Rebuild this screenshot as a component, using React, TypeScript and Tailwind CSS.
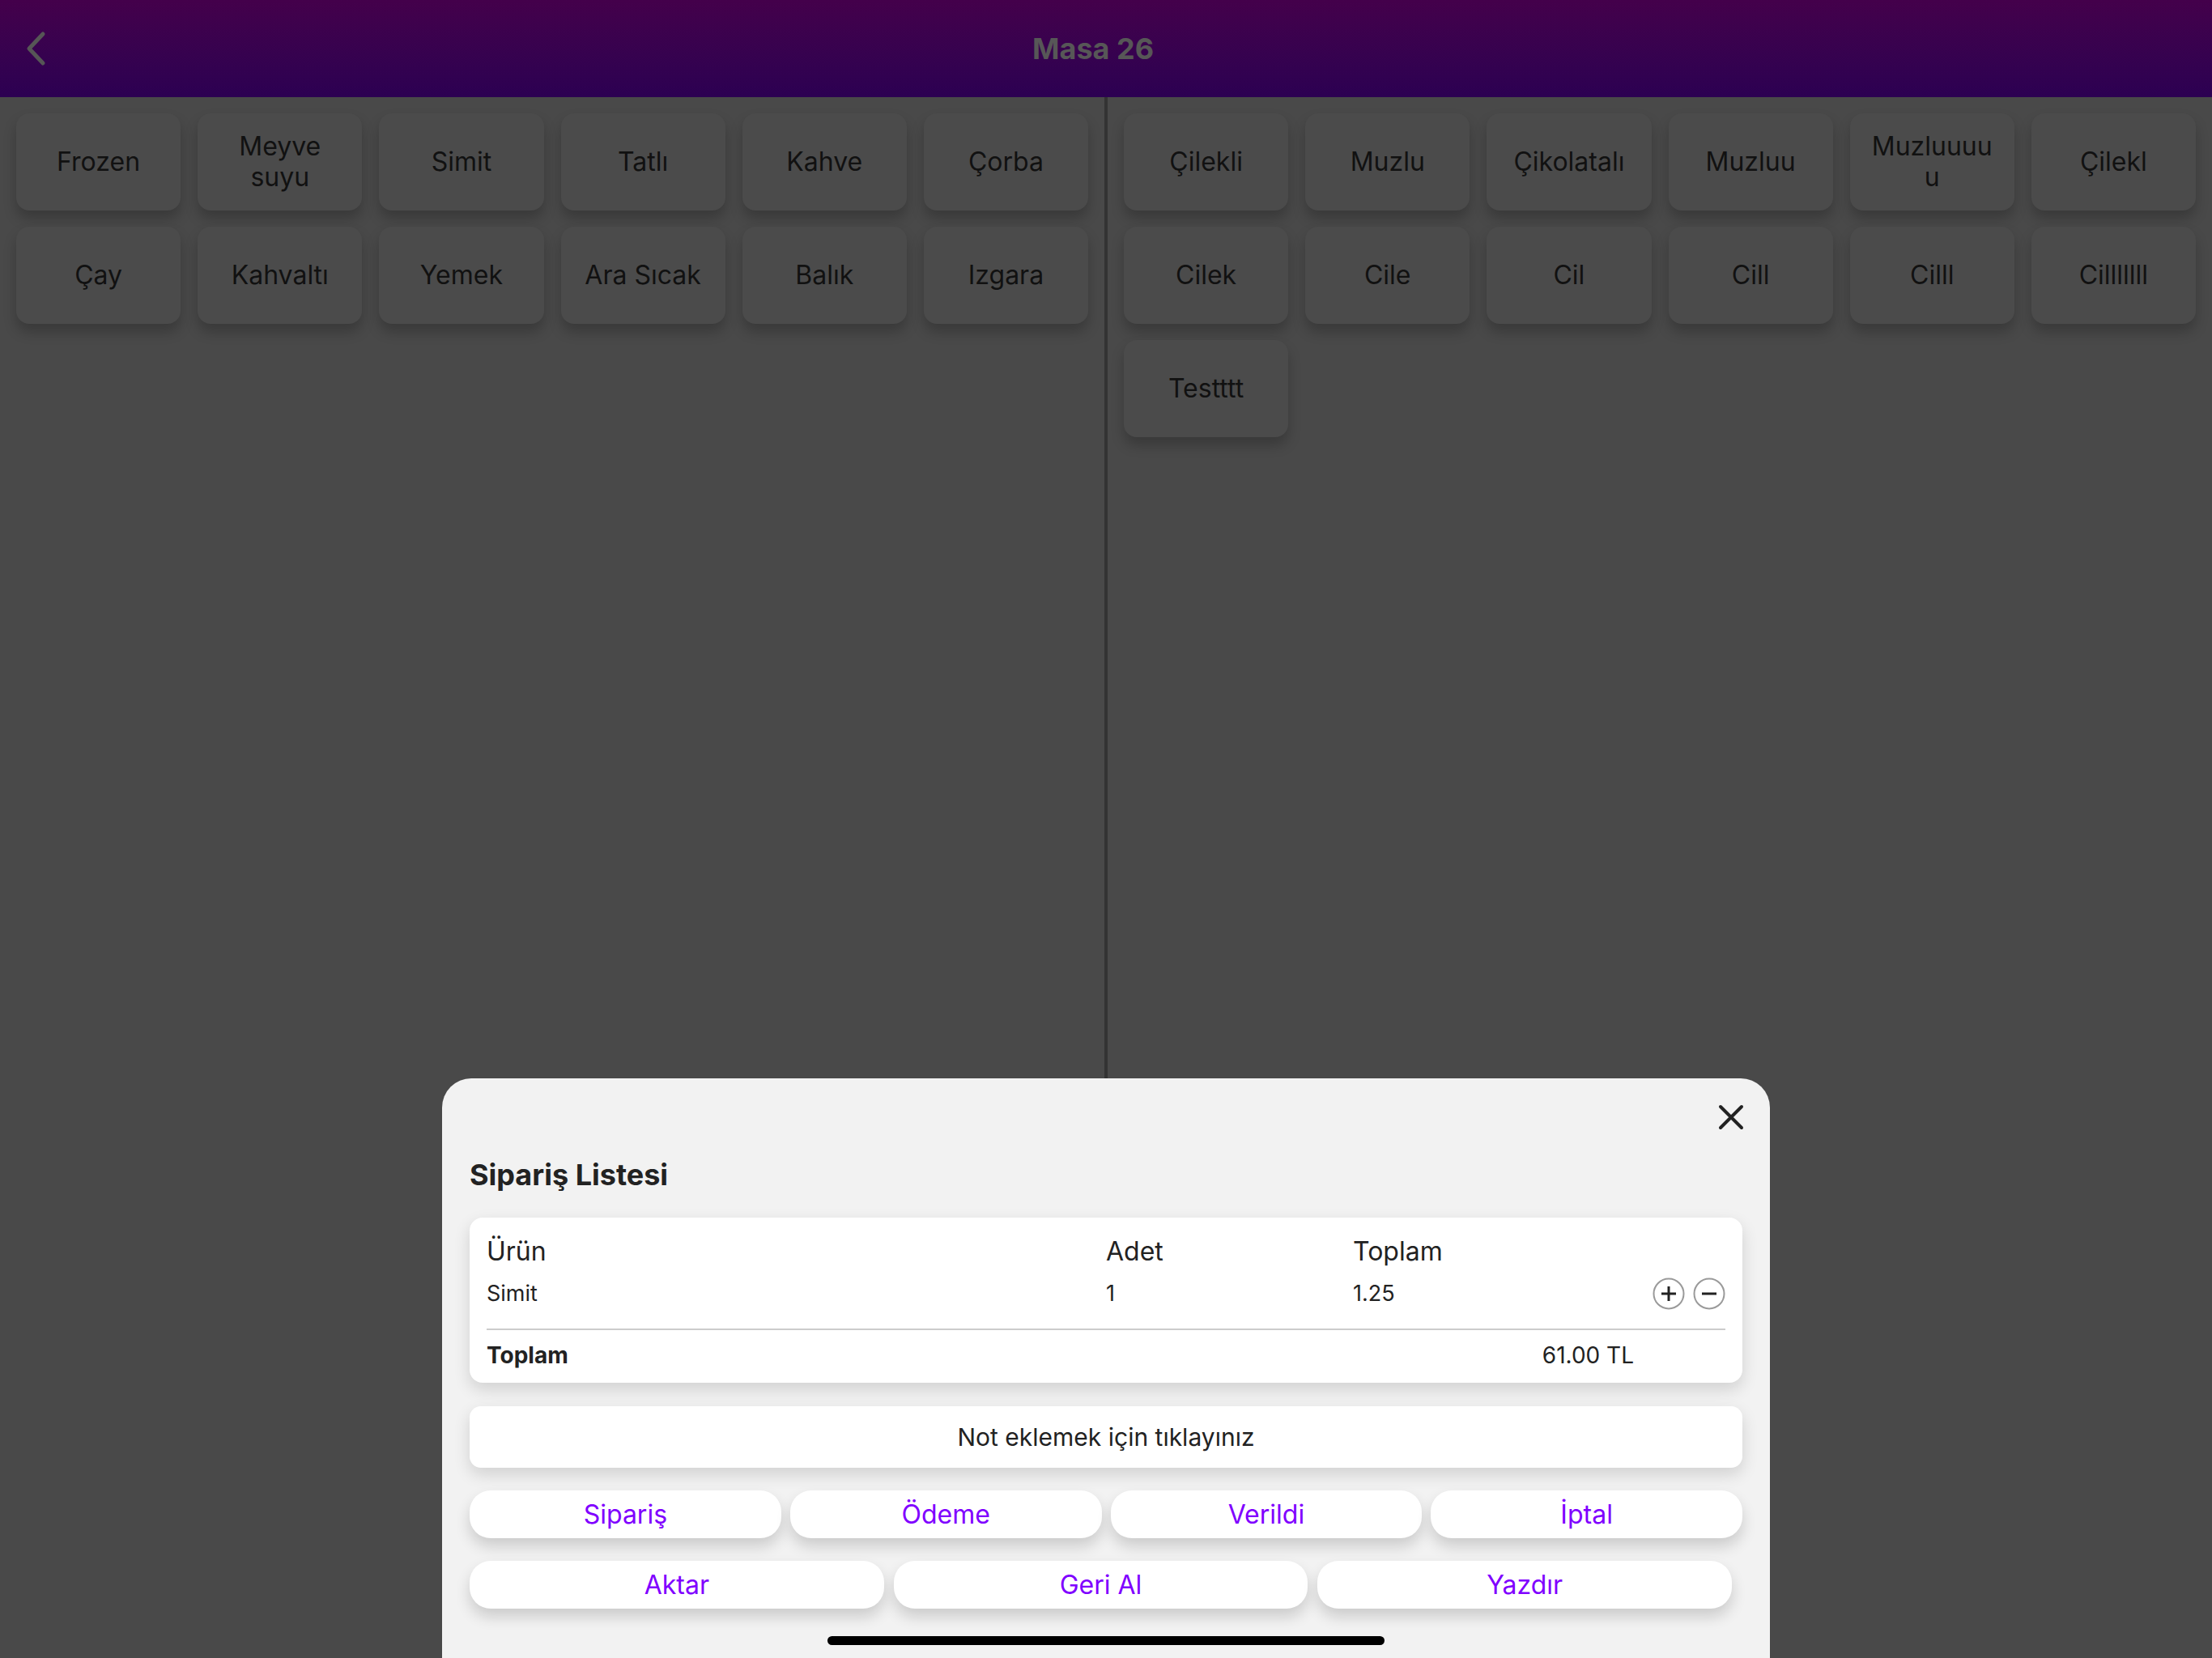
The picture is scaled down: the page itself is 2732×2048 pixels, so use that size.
import { FunctionComponent } from 'react'

const leftCategories = ['Frozen', 'Meyve\nsuyu', 'Simit', 'Tatlı', 'Kahve', 'Çorba', 'Çay', 'Kahvaltı', 'Yemek', 'Ara Sıcak', 'Balık', 'Izgara']

const rightProducts = ['Çilekli', 'Muzlu', 'Çikolatalı', 'Muzluu', 'Muzluuuu\nu', 'Çilekl', 'Cilek', 'Cile', 'Cil', 'Cill', 'Cilll', 'Cilllllll', 'Testttt']

const topActions = ['Sipariş', 'Ödeme', 'Verildi', 'İptal']
const bottomActions = ['Aktar', 'Geri Al', 'Yazdır']

// kategori / ürün kutusu
const Tile: FunctionComponent<{ label: string }> = ({ label }) => (
  <button className="flex h-[120px] items-center justify-center whitespace-pre-line rounded-[16px] bg-[#4b4b4b] px-2 text-center text-[32px] leading-[38px] text-[#111] shadow-[0_10px_16px_rgba(0,0,0,0.22)]">
    {label}
  </button>
)

const RoundIcon: FunctionComponent<{ minus?: boolean }> = ({ minus }) => (
  <svg width="40" height="40" viewBox="0 0 40 40">
    <circle cx="20" cy="20" r="18.5" fill="none" stroke="#9a9a9a" strokeWidth="2" />
    <line x1="11" y1="20" x2="29" y2="20" stroke="#222" strokeWidth="3" />
    {!minus && <line x1="20" y1="11" x2="20" y2="29" stroke="#222" strokeWidth="3" />}
  </svg>
)

const ActionButton: FunctionComponent<{ label: string }> = ({ label }) => (
  <button className="flex h-[59px] items-center justify-center rounded-[26px] bg-white text-[32px] text-[#8000ff] shadow-[0_10px_18px_rgba(0,0,0,0.16)]">
    {label}
  </button>
)

const App: FunctionComponent = () => {
  return (
    <div
      className="relative h-[2048px] w-[2732px] overflow-hidden bg-[#494949]"
      style={{ fontFamily: 'Inter, "Noto Sans", sans-serif' }}
    >
      {/* üst bar */}
      <div className="flex h-[120px] items-center bg-gradient-to-b from-[#44004b] to-[#2c0052]">
        <div className="flex w-[90px] justify-start pl-[32px]">
          <svg width="26" height="44" viewBox="0 0 26 44">
            <path d="M21 4 L4 22 L21 40" fill="none" stroke="#565656" strokeWidth="5" strokeLinecap="round" strokeLinejoin="round" />
          </svg>
        </div>
        <p className="flex-1 text-center text-[36px] font-bold text-[#575757]">Masa 26</p>
        <div className="w-[122px]" />
      </div>

      <div className="grid h-[1928px] grid-cols-[1364px_4px_1364px]">
        <div className="grid grid-cols-6 content-start gap-x-[21px] gap-y-[20px] p-[20px]">
          {leftCategories.map((c) => (
            <Tile key={c} label={c} />
          ))}
        </div>
        <div className="bg-[#333333]" />
        <div className="grid grid-cols-6 content-start gap-x-[21px] gap-y-[20px] p-[20px]">
          {rightProducts.map((p) => (
            <Tile key={p} label={p} />
          ))}
        </div>
      </div>

      {/* sipariş listesi paneli */}
      <div className="absolute left-[546px] top-[1332px] flex h-[716px] w-[1640px] flex-col rounded-t-[36px] bg-[#f2f2f2] px-[34px] pt-[32px]">
        <div className="flex h-[32px] justify-end">
          <svg width="32" height="32" viewBox="0 0 32 32" className="-mr-[2px]">
            <path d="M3 3 L29 29 M29 3 L3 29" stroke="#222" strokeWidth="4" strokeLinecap="round" />
          </svg>
        </div>
        <p className="mt-[33px] text-[36px] font-bold leading-[44px] text-[#222]">Sipariş Listesi</p>

        <div className="mt-[31px] h-[204px] rounded-[16px] bg-white px-[21px] pt-[23px] shadow-[0_8px_20px_rgba(0,0,0,0.14)]">
          <div className="grid grid-cols-[765px_305px_1fr] text-[32px] leading-[38px] text-[#222]">
            <span>Ürün</span>
            <span>Adet</span>
            <span>Toplam</span>
          </div>
          <div className="mt-[13px] grid h-[40px] grid-cols-[765px_305px_1fr] items-center text-[27px] text-[#222]">
            <span>Simit</span>
            <span>1</span>
            <div className="flex items-center justify-between">
              <span>1.25</span>
              <div className="flex gap-[10px]">
                <RoundIcon />
                <RoundIcon minus />
              </div>
            </div>
          </div>
          <div className="mt-[23px] h-[2px] bg-[#cccccc]" />
          <div className="mt-[10px] flex items-center justify-between text-[28px] text-[#222]">
            <span className="font-bold">Toplam</span>
            <span className="mr-[113px]">61.00 TL</span>
          </div>
        </div>

        <button className="mt-[29px] flex h-[76px] items-center justify-center rounded-[14px] bg-white text-[30px] text-[#222] shadow-[0_8px_20px_rgba(0,0,0,0.14)]">
          Not eklemek için tıklayınız
        </button>

        <div className="mt-[28px] grid grid-cols-4 gap-[11px]">
          {topActions.map((a) => (
            <ActionButton key={a} label={a} />
          ))}
        </div>
        <div className="mt-[28px] grid w-[1559px] grid-cols-3 gap-[12px]">
          {bottomActions.map((a) => (
            <ActionButton key={a} label={a} />
          ))}
        </div>

        <div className="mx-auto mt-[34px] h-[11px] w-[688px] rounded-full bg-black" />
      </div>
    </div>
  )
}

export default App
